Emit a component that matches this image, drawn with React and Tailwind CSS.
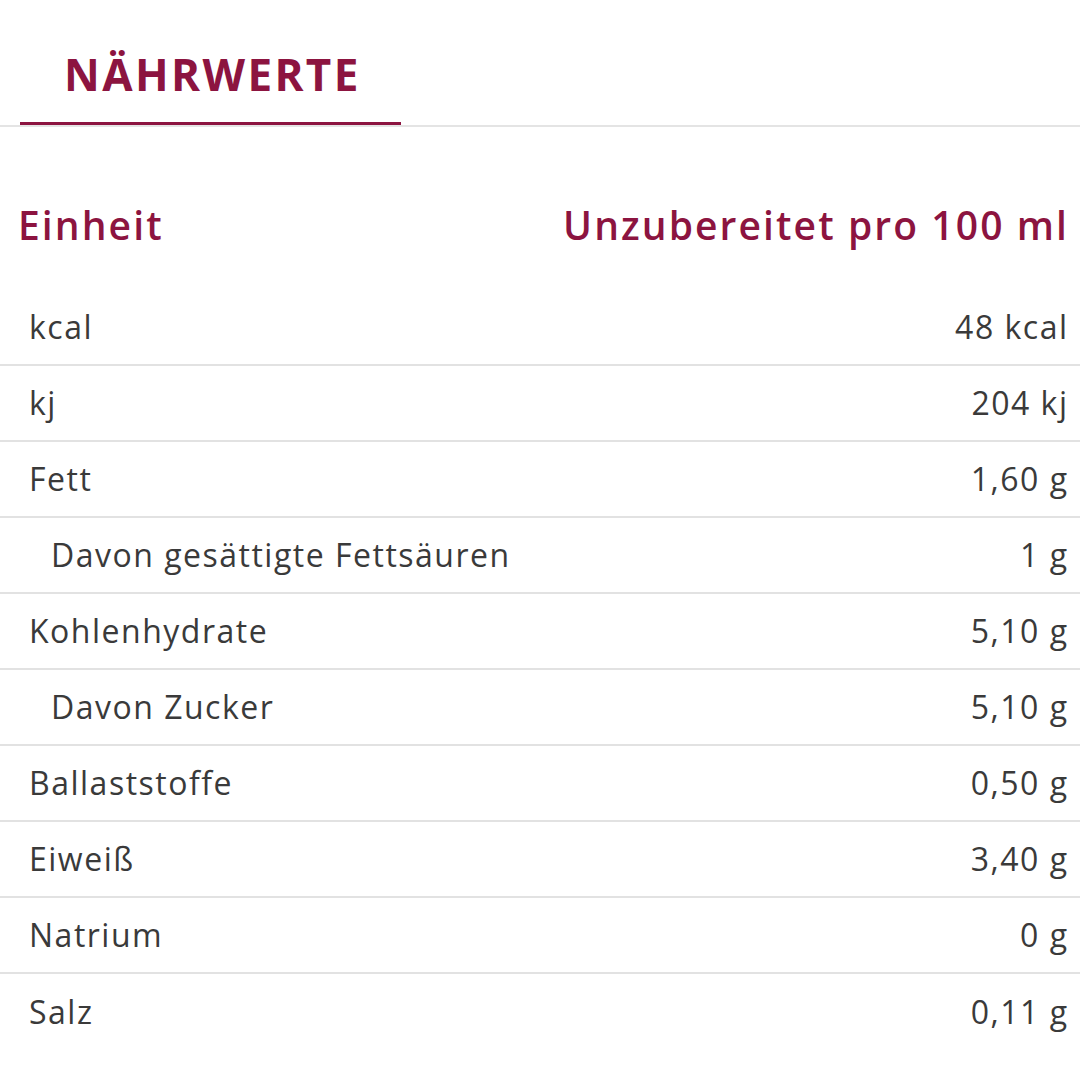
const rows = [
  { label: 'kcal', value: '48 kcal' },
  { label: 'kj', value: '204 kj' },
  { label: 'Fett', value: '1,60 g' },
  { label: 'Davon gesättigte Fettsäuren', value: '1 g', sub: true },
  { label: 'Kohlenhydrate', value: '5,10 g' },
  { label: 'Davon Zucker', value: '5,10 g', sub: true },
  { label: 'Ballaststoffe', value: '0,50 g' },
  { label: 'Eiweiß', value: '3,40 g' },
  { label: 'Natrium', value: '0 g' },
  { label: 'Salz', value: '0,11 g' },
]

export default function App() {
  return (
    <div className="w-[1080px] h-[1080px] bg-white font-['Open_Sans',sans-serif] overflow-hidden">
      <div className="pt-[44px] border-b-2 border-[#e4e4e4]">
        <div className="ml-[20px] w-[381px] border-b-[3px] border-[#8c1440] pl-[44px] pb-[18px]">
          <h1 className="text-[44px] leading-[60px] font-bold text-[#8c1440] tracking-[2.4px]">NÄHRWERTE</h1>
        </div>
      </div>

      <div className="flex justify-between items-center pl-[18px] pr-[13px] mt-[68px] h-[60px] text-[39px] font-semibold text-[#8c1440] tracking-[2.1px]">
        <span>Einheit</span>
        <span className="-mr-[2.1px]">Unzubereitet pro 100 ml</span>
      </div>

      <div className="mt-[35px]">
        {rows.map((r, i) => (
          <div
            key={r.label}
            className={`flex justify-between items-center h-[76px] pr-[13px] text-[32px] tracking-[1.5px] text-[#3a3a3a] ${i < rows.length - 1 ? 'border-b-2 border-[#e2e2e2]' : ''} ${r.sub ? 'pl-[51px]' : 'pl-[29px]'}`}
          >
            <span>{r.label}</span>
            <span className="-mr-[1.5px]">{r.value}</span>
          </div>
        ))}
      </div>
    </div>
  )
}
